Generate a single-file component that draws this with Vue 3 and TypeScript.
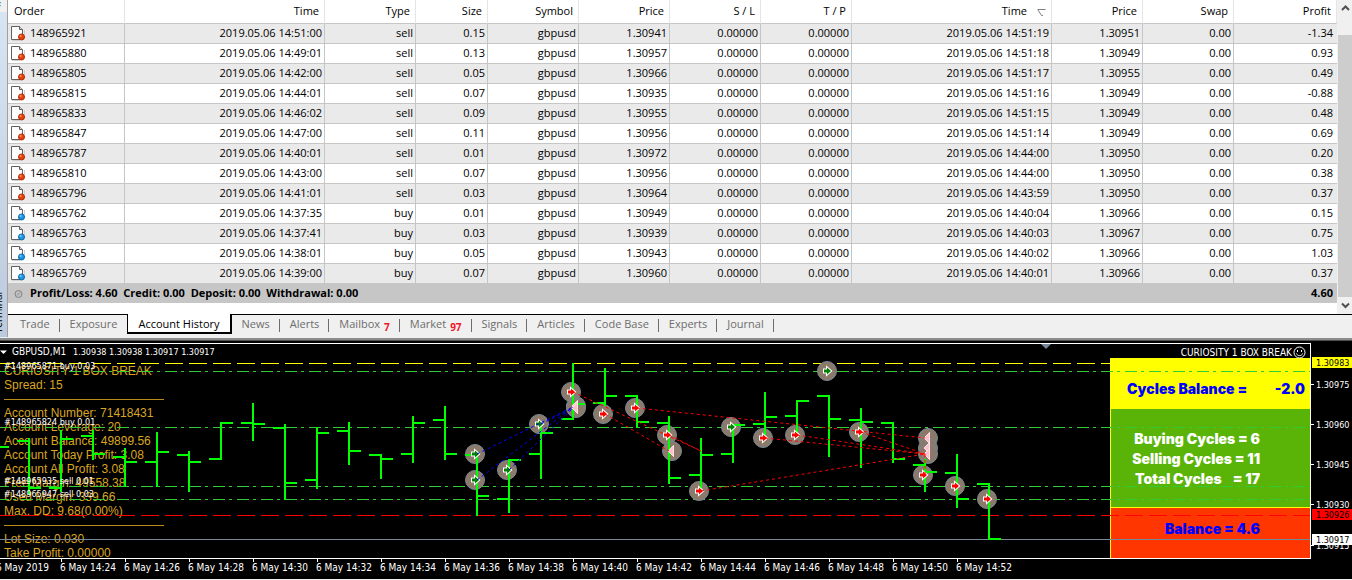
<script setup lang="ts">
interface Trade {
  order: string
  open: string
  type: 'buy' | 'sell'
  size: string
  price: string
  close: string
  closePrice: string
  profit: string
}

const day = '2019.05.06 '
const raw: [string, string, 'buy' | 'sell', string, string, string, string, string][] = [
  ['148965921', '14:51:00', 'sell', '0.15', '1.30941', '14:51:19', '1.30951', '-1.34'],
  ['148965880', '14:49:01', 'sell', '0.13', '1.30957', '14:51:18', '1.30949', '0.93'],
  ['148965805', '14:42:00', 'sell', '0.05', '1.30966', '14:51:17', '1.30955', '0.49'],
  ['148965815', '14:44:01', 'sell', '0.07', '1.30935', '14:51:16', '1.30949', '-0.88'],
  ['148965833', '14:46:02', 'sell', '0.09', '1.30955', '14:51:15', '1.30949', '0.48'],
  ['148965847', '14:47:00', 'sell', '0.11', '1.30956', '14:51:14', '1.30949', '0.69'],
  ['148965787', '14:40:01', 'sell', '0.01', '1.30972', '14:44:00', '1.30950', '0.20'],
  ['148965810', '14:43:00', 'sell', '0.07', '1.30956', '14:44:00', '1.30950', '0.38'],
  ['148965796', '14:41:01', 'sell', '0.03', '1.30964', '14:43:59', '1.30950', '0.37'],
  ['148965762', '14:37:35', 'buy', '0.01', '1.30949', '14:40:04', '1.30966', '0.15'],
  ['148965763', '14:37:41', 'buy', '0.03', '1.30939', '14:40:03', '1.30967', '0.75'],
  ['148965765', '14:38:01', 'buy', '0.05', '1.30943', '14:40:02', '1.30966', '1.03'],
  ['148965769', '14:39:00', 'buy', '0.07', '1.30960', '14:40:01', '1.30966', '0.37'],
]
const trades: Trade[] = raw.map(([order, o, type, size, price, c, closePrice, profit]) => ({
  order, open: day + o, type, size, price, close: day + c, closePrice, profit,
}))

const columns = ['Order', 'Time', 'Type', 'Size', 'Symbol', 'Price', 'S / L', 'T / P', 'Time', 'Price', 'Swap', 'Profit']

const tabs: { name: string; badge?: string; active?: boolean }[] = [
  { name: 'Trade' },
  { name: 'Exposure' },
  { name: 'Account History', active: true },
  { name: 'News' },
  { name: 'Alerts' },
  { name: 'Mailbox', badge: '7' },
  { name: 'Market', badge: '97' },
  { name: 'Signals' },
  { name: 'Articles' },
  { name: 'Code Base' },
  { name: 'Experts' },
  { name: 'Journal' },
]

const info = [
  'CURIOSITY 1 BOX BREAK',
  'Spread: 15',
  '',
  'Account Number: 71418431',
  'Account Leverage: 20',
  'Account Balance: 49899.56',
  'Account Today Profit: 3.08',
  'Account All Profit: 3.08',
  'Free Margin: 49558.38',
  'Used Margin: 339.66',
  'Max. DD: 9.68(0.00%)',
  '',
  'Lot Size: 0.030',
  'Take Profit: 0.00000',
]

const cycleCounts = ['Buying Cycles = 6', 'Selling Cycles = 11', 'Total Cycles    = 17']

// x, high, low, open, close
const bars: [number, number, number, number, number][] = [
  [-3, 100, 107, 106, 107],
  [29, 98, 155, 101, 148],
  [61, 90, 152, 148, 99],
  [93, 90, 120, 96, 114],
  [125, 108, 147, 117, 122],
  [157, 92, 147, 122, 112],
  [189, 111, 152, 115, 122],
  [221, 82, 120, 119, 83],
  [253, 63, 101, 83, 84],
  [285, 84, 160, 88, 143],
  [317, 87, 149, 140, 93],
  [349, 82, 125, 91, 111],
  [381, 114, 139, 115, 119],
  [413, 76, 123, 114, 83],
  [445, 66, 120, 80, 114],
  [477, 111, 176, 115, 156],
  [509, 119, 173, 159, 120],
  [541, 84, 139, 114, 93],
  [573, 23, 80, 79, 64],
  [605, 28, 66, 63, 56],
  [637, 55, 88, 56, 82],
  [669, 76, 144, 83, 138],
  [701, 98, 149, 135, 115],
  [733, 84, 123, 114, 85],
  [765, 52, 96, 84, 77],
  [797, 60, 98, 76, 61],
  [829, 55, 117, 56, 79],
  [861, 68, 128, 80, 82],
  [893, 82, 123, 83, 119],
  [925, 119, 152, 125, 132],
  [957, 114, 168, 133, 159],
  [989, 143, 200, 144, 199],
]

const markers: [number, number, 'buy' | 'sell' | 'close'][] = [
  [475, 114, 'buy'],
  [475, 140, 'buy'],
  [507, 130, 'buy'],
  [539, 84, 'buy'],
  [571, 52, 'sell'],
  [576, 66, 'close'],
  [576, 68, 'close'],
  [603, 74, 'sell'],
  [635, 68, 'sell'],
  [667, 95, 'sell'],
  [672, 111, 'close'],
  [699, 151, 'sell'],
  [731, 87, 'buy'],
  [763, 98, 'sell'],
  [795, 95, 'sell'],
  [827, 31, 'buy'],
  [859, 92, 'sell'],
  [928, 98, 'close'],
  [928, 108, 'close'],
  [928, 114, 'close'],
  [923, 135, 'sell'],
  [955, 146, 'sell'],
  [987, 159, 'sell'],
]

const links: [number, number, number, number, 'buy' | 'sell'][] = [
  [477, 114, 573, 67, 'buy'],
  [477, 140, 573, 67, 'buy'],
  [509, 130, 573, 68, 'buy'],
  [541, 84, 573, 68, 'buy'],
  [573, 52, 701, 111, 'sell'],
  [605, 74, 669, 111, 'sell'],
  [669, 95, 701, 111, 'sell'],
  [637, 68, 925, 98, 'sell'],
  [701, 151, 925, 114, 'sell'],
  [765, 98, 925, 114, 'sell'],
  [797, 95, 925, 114, 'sell'],
  [861, 92, 925, 114, 'sell'],
  [925, 135, 925, 114, 'sell'],
]

const levels = [31, 87, 146, 159]
const orderLabels: [string, number][] = [
  ['#148965871 buy 0.03', 29],
  ['#148965824 buy 0.01', 85],
  ['#148965935 sell 0.01', 144],
  ['#148965947 sell 0.03', 157],
]
const times = Array.from({ length: 15 }, (_, i) => ({ x: 61 + i * 64, text: `6 May 14:${24 + i * 2}` }))
const prices: [string, number][] = [
  ['1.30975', 44],
  ['1.30960', 84],
  ['1.30945', 124],
  ['1.30930', 164],
  ['1.30915', 205],
]
</script>

<template>
  <main class="terminal">
    <section class="history">
      <aside class="side">
        <span class="side-close">×</span>
        <span class="side-name">Terminal</span>
      </aside>
      <div class="content">
        <div class="list">
          <div class="table-wrap">
            <table>
              <colgroup>
                <col class="w-order"><col class="w-time"><col class="w-std"><col class="w-size">
                <col class="w-std"><col class="w-std"><col class="w-std"><col class="w-std">
                <col class="w-time"><col class="w-std"><col class="w-std"><col class="w-profit">
              </colgroup>
              <thead>
                <tr>
                  <th v-for="(c, i) in columns" :key="i" scope="col">
                    {{ c }}<svg v-if="i === 8" class="sort" width="9" height="8" viewBox="0 0 9 8"><path d="M0.5 1.5H8.5M1 2L4.5 7.5H6" /></svg>
                  </th>
                </tr>
              </thead>
              <tbody>
                <tr v-for="t in trades" :key="t.order">
                  <td>
                    <span class="order">
                      <svg width="16" height="16" viewBox="0 0 16 16" :class="t.type">
                        <path class="shade" d="M2 15.5H10M14.5 5V10" />
                        <path class="page" d="M1.5 1.5H9.5L12.5 4.5V14.5H1.5Z" />
                        <path class="fold" d="M9.5 1.5V4.5H12.5" />
                        <circle class="ball" cx="11.5" cy="12" r="3" />
                        <circle class="shine" cx="10.7" cy="11" r="1" />
                      </svg>{{ t.order }}
                    </span>
                  </td>
                  <td>{{ t.open }}</td>
                  <td>{{ t.type }}</td>
                  <td>{{ t.size }}</td>
                  <td>gbpusd</td>
                  <td>{{ t.price }}</td>
                  <td>0.00000</td>
                  <td>0.00000</td>
                  <td>{{ t.close }}</td>
                  <td>{{ t.closePrice }}</td>
                  <td>0.00</td>
                  <td>{{ t.profit }}</td>
                </tr>
              </tbody>
              <tfoot>
                <tr>
                  <td colspan="11">
                    <span class="order">
                      <svg width="16" height="16" viewBox="0 0 16 16"><circle class="dot" cx="8.5" cy="9" r="3.5" /><path class="slash" d="M7 10.5L10 7.5" /></svg>Profit/Loss: 4.60&nbsp; Credit: 0.00&nbsp; Deposit: 0.00&nbsp; Withdrawal: 0.00
                    </span>
                  </td>
                  <td>4.60</td>
                </tr>
              </tfoot>
            </table>
          </div>
          <div class="scrollbar">
            <button type="button" aria-label="Scroll up"><svg width="9" height="7" viewBox="0 0 9 7"><path d="M1 5L4.5 1.5L8 5" /></svg></button>
            <div class="thumb"></div>
            <button type="button" aria-label="Scroll down"><svg width="9" height="7" viewBox="0 0 9 7"><path d="M1 1.5L4.5 5L8 1.5" /></svg></button>
          </div>
        </div>
        <nav class="tabs">
          <button v-for="t in tabs" :key="t.name" type="button" :class="{ active: t.active }">
            {{ t.name }}<sub v-if="t.badge">{{ t.badge }}</sub>
          </button>
        </nav>
      </div>
    </section>

    <section class="chart">
      <div class="plot">
        <div class="info">
          <template v-for="(line, i) in info" :key="i">
            <p v-if="line">{{ line }}</p>
            <hr v-else>
          </template>
        </div>

        <div class="panel">
          <div class="cycles"><span>Cycles Balance =</span><span>-2.0</span></div>
          <div class="counts">
            <p v-for="line in cycleCounts" :key="line">{{ line }}</p>
          </div>
          <div class="balance">Balance = 4.6</div>
        </div>

        <svg class="canvas" width="100%" height="100%">
          <path class="solid" d="M0 10.5H7L3.5 14Z" />
          <text class="time" x="12" y="15">GBPUSD,M1</text>
          <text x="73" y="15">1.30938 1.30938 1.30917 1.30917</text>
          <path class="slate" d="M1041 4H1051L1046 9Z" />

          <line class="dash yellow" x1="0" x2="100%" y1="23.5" y2="23.5" />
          <line v-for="y in levels" :key="y" class="dashdot" x1="0" x2="100%" :y1="y + 0.5" :y2="y + 0.5" />
          <line class="dash red" x1="0" x2="100%" y1="175.5" y2="175.5" />
          <line class="bid" x1="0" x2="100%" y1="199.5" y2="199.5" />

          <circle v-for="([x, y], i) in markers" :key="i" class="disc" :cx="x" :cy="y" r="9.5" />
          <path
            v-for="[x, h, l, o, c] in bars" :key="x" class="bar"
            :d="`M${x} ${h}V${l}M${x - 12} ${o}H${x}M${x} ${c}H${x + 12}`"
          />
          <g v-for="([x, y, kind], i) in markers" :key="i">
            <path v-if="kind === 'close'" class="closer" :d="`M${x - 4} ${y}L${x + 1.5} ${y - 5.5}V${y + 5.5}Z`" />
            <path v-else :class="['arrow', kind]" :d="`M${x - 3} ${y - 1.5}H${x}V${y - 3.5}L${x + 4} ${y}L${x} ${y + 3.5}V${y + 1.5}H${x - 3}Z`" />
          </g>
          <line
            v-for="([x1, y1, x2, y2, kind], i) in links" :key="i" :class="['link', kind]"
            :x1="x1" :y1="y1" :x2="x2" :y2="y2"
          />
          <text v-for="[label, y] in orderLabels" :key="label" x="4" :y="y">{{ label }}</text>

          <line class="frame" x1="0" x2="100%" y1="218.5" y2="218.5" />
          <text class="time" x="-4" y="231">6 May 2019</text>
          <g v-for="t in times" :key="t.x">
            <line class="frame" :x1="t.x + 0.5" :x2="t.x + 0.5" y1="219" y2="222" />
            <text class="time" :x="t.x - 1" y="231">{{ t.text }}</text>
          </g>
        </svg>

        <div class="expert">
          <span>CURIOSITY 1 BOX BREAK</span>
          <svg width="13" height="13" viewBox="0 0 13 13">
            <circle cx="6.5" cy="6.5" r="5.5" />
            <path d="M3.5 7.5C4 10.3 9 10.3 9.5 7.5M4.5 4V6M8.5 4V6" />
          </svg>
        </div>
        <div class="outline"></div>
      </div>

      <svg class="axis" width="41" height="100%">
        <g v-for="[p, y] in prices" :key="p">
          <line class="frame" x1="0" x2="3" :y1="y + 0.5" :y2="y + 0.5" />
          <text x="5" :y="y + 4">{{ p }}</text>
        </g>
        <rect class="tag-yellow" x="1" y="17" width="40" height="11" />
        <text class="dark" x="5" y="26">1.30983</text>
        <rect class="tag-red" x="1" y="169" width="40" height="11" />
        <text class="dark" x="5" y="178">1.30926</text>
        <rect class="tag-white" x="1" y="194" width="40" height="11" />
        <text class="dark" x="5" y="203">1.30917</text>
      </svg>
    </section>
  </main>
</template>

<style>
body {
  margin: 0;
  background: #f0f0f0;
}
</style>

<style scoped>
* {
  box-sizing: border-box;
}

.terminal {
  font: 11px/20px "Open Sans", "Noto Sans", sans-serif;
  color: #000;
}

.history {
  display: flex;
  height: 340px;
  border-bottom: 2px solid #8c8c8c;
  background: #f0f0f0;
}

.side {
  display: flex;
  flex-direction: column;
  justify-content: space-between;
  width: 8px;
  height: 337px;
  overflow: hidden;
  border-right: 1px solid #a0a0a0;
  background: linear-gradient(#f0f0f0 12px, #d7e4f2 12px, #bccbdc);
}

.side-close {
  margin-left: -5px;
  font-weight: 700;
  line-height: 8px;
}

.side-name {
  width: 14px;
  margin: 0 0 4px -9px;
  font-size: 10px;
  line-height: 14px;
  writing-mode: vertical-rl;
  transform: rotate(180deg);
}

.content {
  flex: 1;
  min-width: 0;
}

.list {
  display: flex;
  height: 314px;
  background: #fff;
}

.table-wrap {
  flex: 1;
  min-width: 0;
}

table {
  width: 100%;
  table-layout: fixed;
  border-collapse: separate;
  border-spacing: 0;
}

.w-order { width: 117px; }
.w-time { width: 200px; }
.w-std { width: 91px; }
.w-size { width: 72px; }
.w-profit { width: 103px; }

th,
td {
  border-right: 1px solid #c6c6c6;
  border-bottom: 1px solid #c6c6c6;
  text-align: right;
  white-space: nowrap;
}

th {
  height: 24px;
  padding: 0 5px 2px;
  border-right-color: #e5e5e5;
  font-weight: 400;
}

th:first-child {
  text-align: left;
  padding-left: 6px;
}

td {
  height: 20px;
  padding: 0 2px 2px 0;
  line-height: 17px;
}

td:last-child {
  border-right: 0;
  padding-right: 4px;
}

tbody tr:nth-child(odd) {
  background: #eaeaea;
}

tfoot td {
  height: 19px;
  border: 0;
  background: #c6c6c6;
  font-weight: 700;
}

.sort {
  margin: 0 0 -1px 10px;
  fill: none;
  stroke: #808080;
}

.order {
  display: flex;
  align-items: center;
  gap: 4px;
  height: 17px;
  padding-left: 2px;
}

.order svg {
  margin-top: 1px;
}

.page { fill: #fdfdfd; stroke: #606060; }
.shade { fill: none; stroke: #cfcfcf; }
.fold { fill: #d8d8d8; stroke: #606060; }
.sell .ball { fill: #e8430f; stroke: #b52a00; }
.buy .ball { fill: #1e96e6; stroke: #0868ac; }
.sell .shine { fill: #ff9a70; }
.buy .shine { fill: #86d0ff; }
.dot { fill: #c0c0c0; stroke: #858585; }
.slash { stroke: #8c8c8c; }

.scrollbar {
  display: flex;
  flex-direction: column;
  width: 15px;
  padding-left: 1px;
  background: #f0f0f0;
}

.scrollbar button {
  display: flex;
  align-items: center;
  justify-content: center;
  height: 17px;
  padding: 0;
  border: 0;
  background: #f0f0f0;
}

.scrollbar path {
  fill: none;
  stroke: #505050;
  stroke-width: 2;
}

.thumb {
  flex: 1;
  margin-top: 18px;
  background: #cdcdcd;
}

.tabs {
  display: flex;
  height: 23px;
  padding-left: 2px;
  border-top: 1px solid #000;
  background: #f0f0f0;
}

.tabs button {
  position: relative;
  height: 19px;
  padding: 0 10px 2px;
  border: 0;
  background: none;
  color: #6d6d6d;
  font: inherit;
  line-height: 17px;
  white-space: nowrap;
}

.tabs button:not(.active)::after {
  content: "";
  position: absolute;
  top: 4px;
  right: 0;
  width: 1px;
  height: 13px;
  background: #6d6d6d;
}

.tabs button:has(+ .active)::after {
  display: none;
}

.tabs .active {
  height: 20px;
  margin-top: -1px;
  padding-bottom: 0;
  border: solid #000;
  border-width: 0 2px 2px 1px;
  background: #fff;
  color: #000;
}

sub {
  margin-left: 4px;
  color: #f01428;
  font-size: 10px;
  font-weight: 700;
  line-height: 0;
}

.chart {
  display: grid;
  grid-template-columns: 1fr 41px;
  height: 239px;
  border-top: 1px solid #505050;
  background: #000;
}

.plot {
  position: relative;
  overflow: hidden;
  margin-top: -1px;
}

.info {
  padding: 24px 0 0 4px;
  color: #daa520;
  font: 12px/14px "Liberation Sans", Arial, sans-serif;
}

.info p,
.counts p {
  margin: 0;
}

.info hr {
  width: 160px;
  height: 1px;
  margin: 7px 0 6px;
  border: 0;
  background: #b98b1a;
}

.panel {
  position: absolute;
  top: 18px;
  right: 1px;
  width: 200px;
  border-left: 1px solid #ff0;
  color: #00f;
  font: 900 14px/20px Inter, "Liberation Sans", sans-serif;
  text-align: right;
  white-space: pre;
}

.cycles {
  display: flex;
  justify-content: space-between;
  height: 51px;
  padding: 21px 5px 0 16px;
  background: #ff0;
}

.counts {
  height: 99px;
  padding: 20px 50px 0 0;
  border-bottom: 1px solid #ff0;
  background: #5ab408;
  color: #fff;
}

.balance {
  height: 50px;
  padding: 11px 50px 0 0;
  background: #ff3600;
}

.canvas {
  position: absolute;
  inset: 0;
}

.axis {
  margin-top: -1px;
}

text {
  fill: #fff;
  font: 9px "DejaVu Sans Condensed", sans-serif;
  white-space: pre;
}

.time { font-size: 10px; }
.dark { fill: #000; }
.solid { fill: #fff; }
.slate { fill: #778899; }
.dash { stroke-dasharray: 18 6; stroke-dashoffset: 3; }
.yellow { stroke: #ff0; }
.red { stroke: #f00; }
.dashdot { stroke: #32cd32; stroke-dasharray: 12 4 3 5; stroke-dashoffset: 3; }
.bid { stroke: #778899; }
.disc { fill: #8b7969; stroke: #778899; }
.bar { fill: none; stroke: #0f0; stroke-width: 2; }
.arrow { stroke: #fff; stroke-width: 2; paint-order: stroke; }
.arrow.buy { fill: #008000; }
.arrow.sell { fill: #f00; }
.closer { fill: #ffc0cb; stroke: #fff; stroke-width: 1; paint-order: stroke; }
.link { stroke-dasharray: 3 3; }
.link.buy { stroke: #00f; }
.link.sell { stroke: #f00; }
.frame { stroke: #fff; }
.tag-yellow { fill: #ff0; }
.tag-red { fill: #f00; }
.tag-white { fill: #fff; }

.expert {
  position: absolute;
  top: 6px;
  right: 5px;
  display: flex;
  align-items: center;
  gap: 1px;
  color: #fff;
  font: 10px/13px "DejaVu Sans Condensed", sans-serif;
}

.expert svg {
  fill: none;
  stroke: #fff;
}

.outline {
  position: absolute;
  inset: 3px 0 20px;
  border: solid #fff;
  border-width: 1px 1px 0 0;
  pointer-events: none;
}
</style>
